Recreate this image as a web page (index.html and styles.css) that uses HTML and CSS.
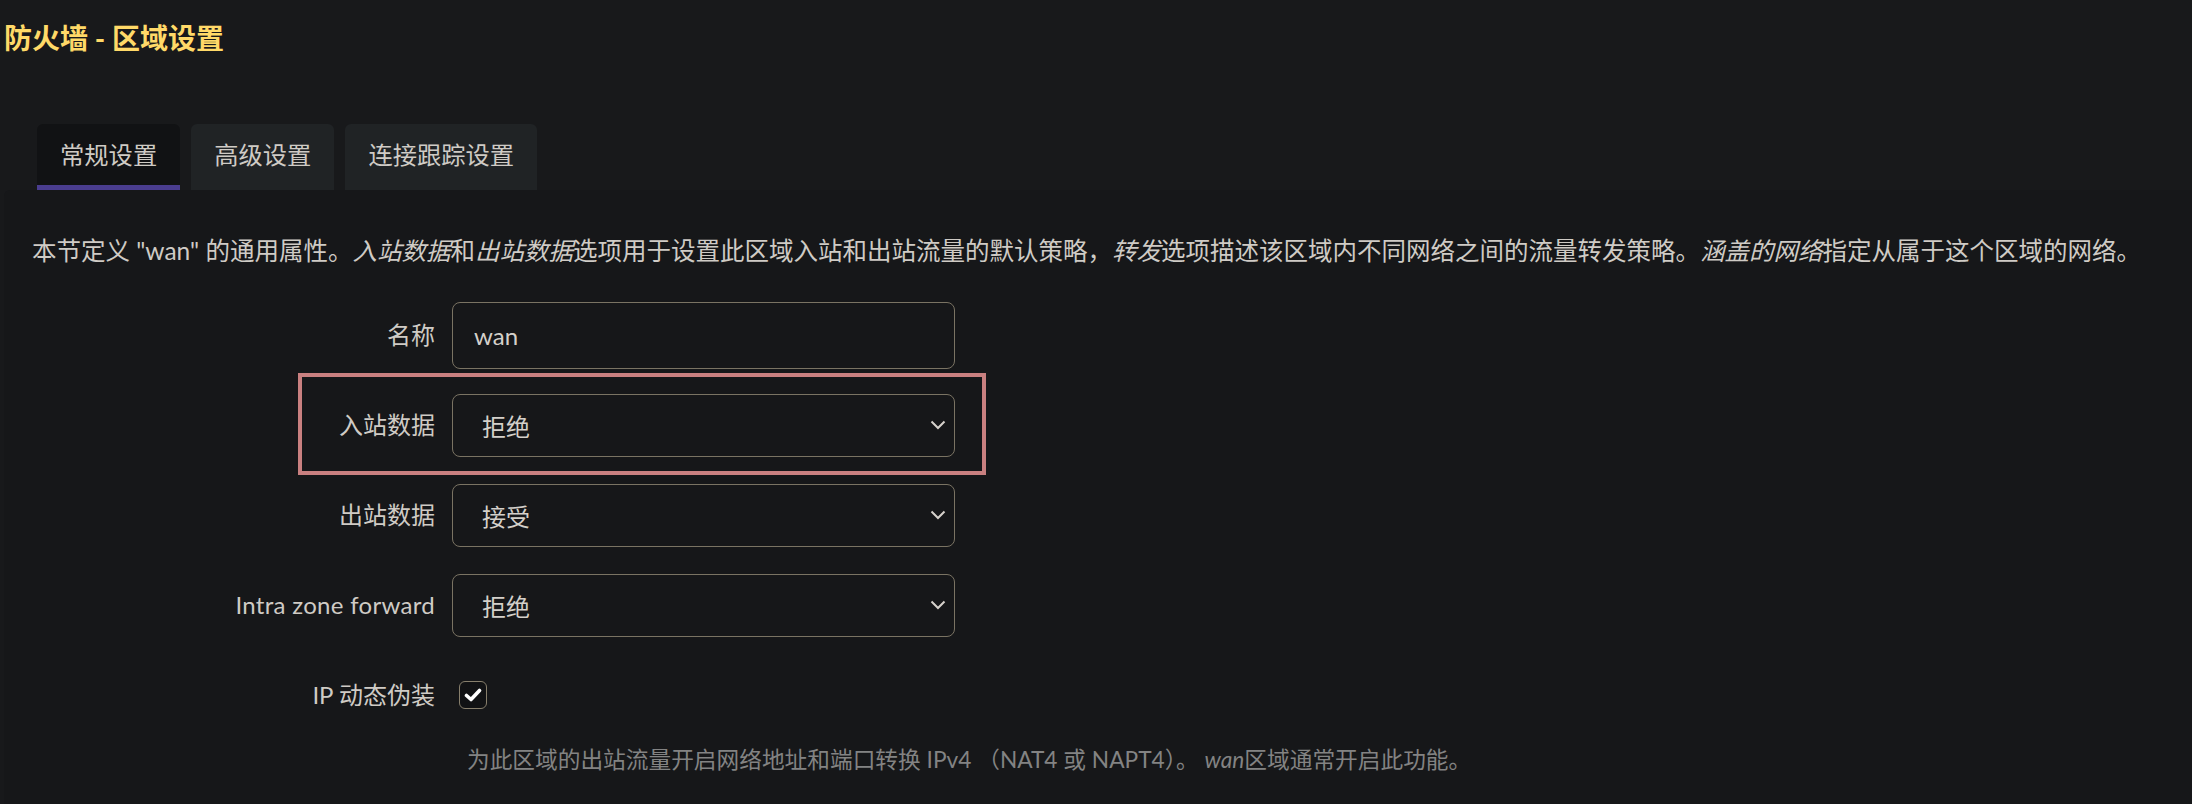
FILE: index.html
```html
<!DOCTYPE html>
<html lang="zh-CN">
<head>
    <meta charset="utf-8">
    <title>防火墙 - 区域设置</title>
    <link rel="stylesheet" href="styles.css">
</head>
<body>
<div class="page">
  <h2 class="title">防火墙 - 区域设置</h2>

  <ul class="tabs">
    <li class="tab active">常规设置</li>
    <li class="tab">高级设置</li>
    <li class="tab">连接跟踪设置</li>
  </ul>

  <div class="panel">
    <p class="desc">本节定义 "wan" 的通用属性。<em>入站数据</em>和<em>出站数据</em>选项用于设置此区域入站和出站流量的默认策略，<em>转发</em>选项描述该区域内不同网络之间的流量转发策略。<em>涵盖的网络</em>指定从属于这个区域的网络。</p>

    <div class="row">
      <label>名称</label>
      <input class="text" type="text" value="wan">
    </div>

    <div class="row marked">
      <label>入站数据</label>
      <div class="select">
        <span>拒绝</span>
        <svg width="16" height="10" viewBox="0 0 16 10"><polyline points="1.5,1.5 8,8 14.5,1.5" fill="none" stroke="#d6d2cc" stroke-width="2"/></svg>
      </div>
    </div>

    <div class="row">
      <label>出站数据</label>
      <div class="select">
        <span>接受</span>
        <svg width="16" height="10" viewBox="0 0 16 10"><polyline points="1.5,1.5 8,8 14.5,1.5" fill="none" stroke="#d6d2cc" stroke-width="2"/></svg>
      </div>
    </div>

    <div class="row">
      <label class="latin">Intra zone forward</label>
      <div class="select">
        <span>拒绝</span>
        <svg width="16" height="10" viewBox="0 0 16 10"><polyline points="1.5,1.5 8,8 14.5,1.5" fill="none" stroke="#d6d2cc" stroke-width="2"/></svg>
      </div>
    </div>

    <div class="row">
      <label>IP 动态伪装</label>
      <span class="check">
        <svg width="18" height="14" viewBox="0 0 18 14"><polyline points="2.5,7.5 7,11.5 15.5,2.5" fill="none" stroke="#fff" stroke-width="3.6" stroke-linejoin="round" stroke-linecap="round"/></svg>
      </span>
    </div>

    <div class="help">为此区域的出站流量开启网络地址和端口转换 IPv4 （NAT4 或 NAPT4）。 <em>wan</em>区域通常开启此功能。</div>
  </div>
</div>
</body>
</html>
```

FILE: styles.css
```css
    body {
        margin: 0;
        background: #18191b;
        color: #cfcbc5;
        font-family: Lato, "Noto Sans CJK SC", sans-serif;
        font-size: 24px;
    }

    .page {
        padding-left: 4px;
    }

    .title {
        margin: 0;
        padding-top: 20px;
        font-size: 28px;
        line-height: 36px;
        font-weight: bold;
        color: #ffd968;
    }

    .tabs {
        list-style: none;
        margin: 68px 0 0 33px;
        padding: 0;
        display: flex;
        gap: 11px;
    }

    .tab {
        height: 61px;
        line-height: 61px;
        padding: 0 23px;
        font-size: 24.3px;
        background: #202325;
        border-bottom: 5px solid transparent;
        border-radius: 6px 6px 0 0;
    }

    .tab.active {
        background: #111214;
        border-bottom-color: #4a3d8f;
    }

    .panel {
        background: #161719;
        border-radius: 6px 0 0 0;
        padding: 43px 28px 0 28px;
        min-height: 571px;
    }

    .desc {
        margin: 0 0 21px 0;
        font-size: 24.5px;
        line-height: 36px;
    }

    .row {
        position: relative;
        display: grid;
        grid-template-columns: 403px 503px;
        column-gap: 17px;
        align-items: center;
        height: 90px;
    }

    .row label {
        text-align: right;
        line-height: 30px;
    }

    .row label.latin {
        letter-spacing: 0.3px;
    }

    input.text {
        box-sizing: border-box;
        height: 67px;
        width: 503px;
        padding: 0 21px;
        border: 1px solid #7a7363;
        border-radius: 8px;
        background: #161719;
        color: #d4d0ca;
        font: inherit;
        outline: none;
    }

    .select {
        box-sizing: border-box;
        height: 63px;
        display: flex;
        align-items: center;
        padding: 0 8px 0 29px;
        border: 1px solid #7a7363;
        border-radius: 8px;
        color: #d4d0ca;
    }

    .select svg {
        margin-left: auto;
    }

    /* highlight box drawn over the row */
    .row.marked::after {
        content: "";
        position: absolute;
        left: 266px;
        top: -7px;
        width: 688px;
        height: 102px;
        box-sizing: border-box;
        border: 4px solid #c98080;
        pointer-events: none;
    }

    .check {
        box-sizing: border-box;
        width: 28px;
        height: 28px;
        margin-left: 7px;
        display: flex;
        align-items: center;
        justify-content: center;
        border: 1.5px solid #877f6c;
        border-radius: 6px;
        background: #111214;
    }

    .help {
        margin: 5px 0 0 435px;
        font-size: 22.7px;
        line-height: 30px;
        color: #838383;
    }
```
